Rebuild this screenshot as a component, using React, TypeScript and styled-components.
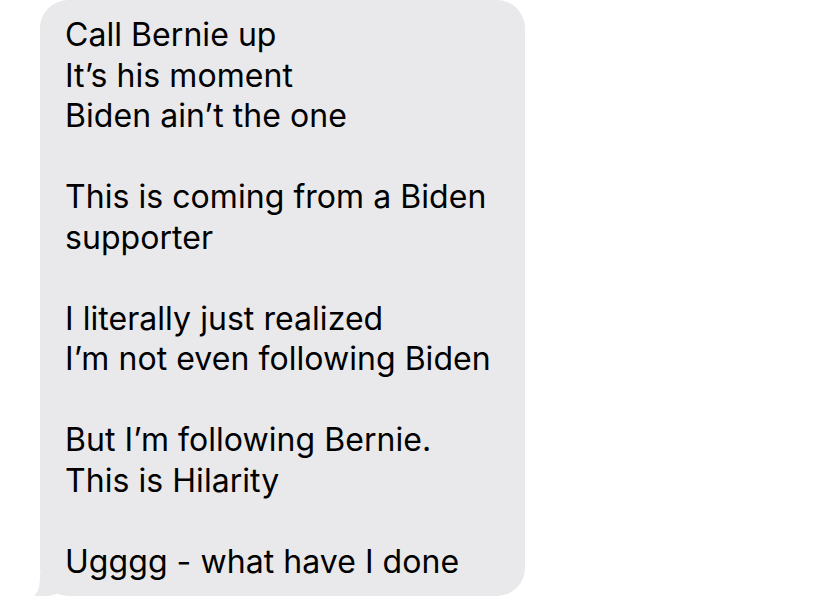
import React from "react";
import styled, { createGlobalStyle } from "styled-components";

const GlobalStyle = createGlobalStyle`
  html, body {
    margin: 0;
    padding: 0;
    background: #ffffff;
  }
  body {
    width: 828px;
    height: 596px;
    overflow: hidden;
    font-family: Inter, "Noto Sans", "Liberation Sans", sans-serif;
  }
`;

const Page = styled.div`
  display: flex;
  align-items: flex-start;
  padding-left: 40px;
  height: 596px;
  box-sizing: border-box;
`;

const Bubble = styled.div`
  position: relative;
  width: 485px;
  box-sizing: border-box;
  background: #e9e9eb;
  border-radius: 28px;
  padding: 15px 20px 14px 25px;
  display: flex;
  flex-direction: column;
  gap: 40.5px;
`;

const Paragraph = styled.div`
  display: flex;
  flex-direction: column;
`;

const Line = styled.div`
  font-size: 32px;
  line-height: 40.5px;
  color: #000000;
  letter-spacing: 0.05px;
  white-space: nowrap;
`;

const Tail = styled.svg`
  position: absolute;
  left: -8px;
  bottom: -1px;
  width: 26px;
  height: 24px;
`;

const paragraphs: string[][] = [
  ["Call Bernie up", "It’s his moment", "Biden ain’t the one"],
  ["This is coming from a Biden", "supporter"],
  ["I literally just realized", "I’m not even following Biden"],
  ["But I’m following Bernie.", "This is Hilarity"],
  ["Ugggg - what have I done"],
];

export default function App() {
  return (
    <>
      <GlobalStyle />
      <Page>
        <Bubble>
          {paragraphs.map((p, i) => (
            <Paragraph key={i}>
              {p.map((l, j) => (
                <Line key={j}>{l}</Line>
              ))}
            </Paragraph>
          ))}
          <Tail viewBox="0 0 26 24">
            <path
              d="M8 0 L26 0 L26 20 C20 23 12 24 2 23 C7 19 8 12 8 0 Z"
              fill="#e9e9eb"
            />
          </Tail>
        </Bubble>
      </Page>
    </>
  );
}
